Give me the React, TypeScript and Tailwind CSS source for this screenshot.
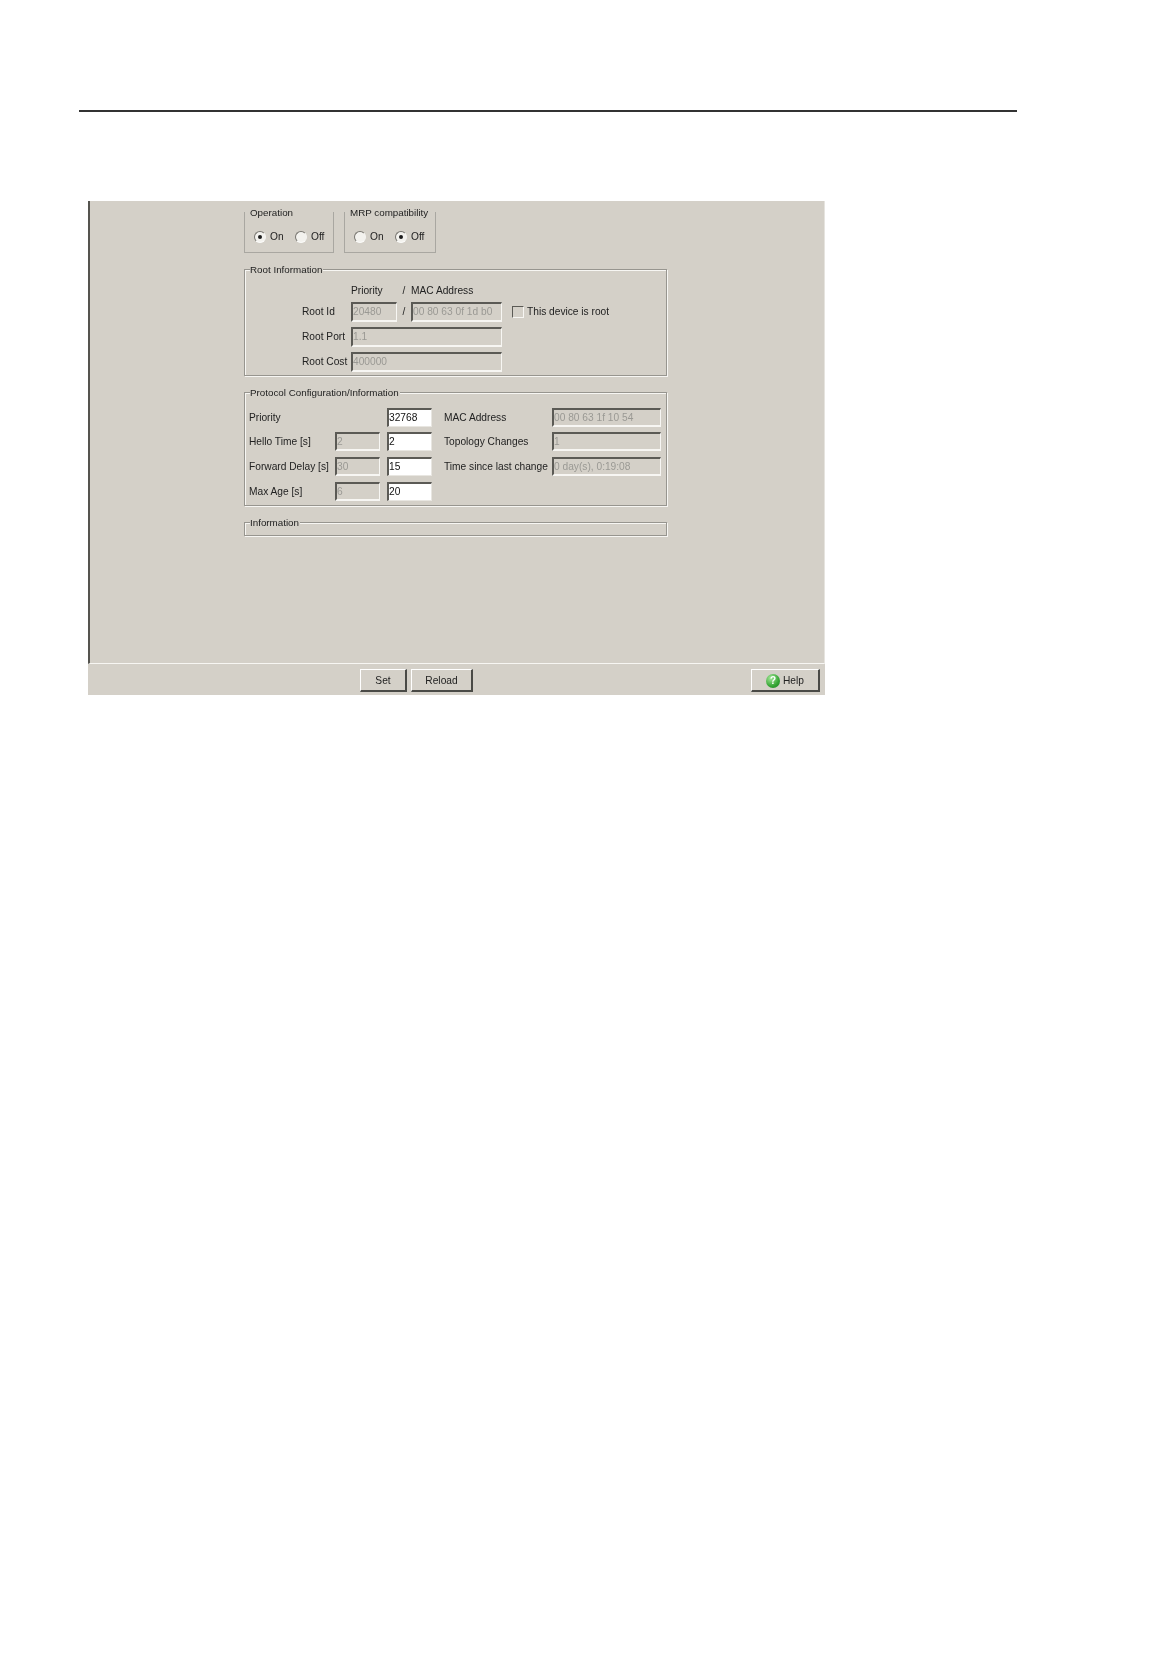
import React from "react";

const font = "[font-family:'Liberation_Sans',Arial,sans-serif]";

function Legend({ children }: { children: React.ReactNode }) {
  return <legend className="ml-[5px] h-[14px] pt-[2px] leading-[12px] pr-[1px] bg-[#d4d0c8] text-[9.8px] text-[#222] whitespace-nowrap">{children}</legend>;
}

function Radio({ on, label, gap }: { on?: boolean; label: string; gap?: boolean }) {
  return (
    <div className={gap ? "flex items-center ml-[5px]" : "flex items-center"}>
      <span className="w-[12px] h-[12px] rounded-full bg-[#f3f2ee] border border-[#77756f] border-r-[#f4f3f0] border-b-[#fbfbfa] flex items-center justify-center">
        {on && <span className="w-[4px] h-[4px] rounded-full bg-[#1c1c1c]" />}
      </span>
      <span className="ml-[4px] w-[20px] text-[10.2px] leading-[14px] text-[#222]">{label}</span>
    </div>
  );
}

function Field({ value, w, h = "h-[20px]" }: { value: string; w: string; h?: string }) {
  return (
    <div className={`${w} ${h} shrink-0 border-t-2 border-l-2 border-r border-b-2 border-t-[#5b5a55] border-l-[#5b5a55] border-r-[#f7f6f3] border-b-[#f7f6f3] text-[10.2px] leading-[15px] text-[#9a9994] overflow-hidden whitespace-nowrap`}>
      {value}
    </div>
  );
}

function Edit({ value }: { value: string }) {
  return (
    <div className="w-[45px] h-[19px] shrink-0 bg-white border-t-2 border-l-2 border-r border-b border-t-[#5b5a55] border-l-[#5b5a55] border-r-[#e8e6e1] border-b-[#e8e6e1] text-[10.2px] leading-[15px] text-[#111]">
      {value}
    </div>
  );
}

function Button({ children, w, cls }: { children: React.ReactNode; w: string; cls?: string }) {
  return (
    <div className={`${w} ${cls ?? ""} h-[23px] pt-[2px] flex items-center justify-center border-t border-l border-r-2 border-b-2 border-t-white border-l-white border-r-[#4a4a46] border-b-[#4a4a46] text-[10.2px] text-[#222]`}>
      {children}
    </div>
  );
}

function ProtoRow({ label, left, right, rlabel, rvalue, cls }: { label: string; left?: string; right: string; rlabel?: string; rvalue?: string; cls: string }) {
  return (
    <div className={`flex items-center h-[19px] ${cls}`}>
      <span className="w-[86px] shrink-0 text-[10.2px] text-[#222] whitespace-nowrap">{label}</span>
      {left !== undefined ? <Field value={left} w="w-[45px]" h="h-[19px]" /> : <div className="w-[45px] shrink-0" />}
      <div className="w-[7px] shrink-0" />
      <Edit value={right} />
      {rlabel !== undefined && <span className="ml-[12px] w-[108px] shrink-0 text-[10.2px] text-[#222] whitespace-nowrap">{rlabel}</span>}
      {rvalue !== undefined && <Field value={rvalue} w="w-[109px]" h="h-[19px]" />}
    </div>
  );
}

const fieldsetCls = "border border-[#97958f] shadow-[inset_1px_1px_0_#f7f6f3,1px_1px_0_#f7f6f3] min-w-0";

export default function App() {
  return (
    <div className={`w-[1174px] h-[1668px] bg-white overflow-hidden ${font}`}>
      <div className="ml-[79px] mt-[110px] w-[938px] h-[2px] bg-[#333]" />
      <div className="ml-[88px] mt-[89px] w-[737px] h-[494px] flex flex-col bg-[#d4d0c8] blur-[0.3px]">
        <div className="flex-1 border-l-2 border-l-[#55544f] border-r border-r-[#e6e4df] border-b border-b-[#f7f6f3] pl-[154px]">
          <div className="w-[423px] pt-[4px]">
            <div className="flex gap-[10px]">
              <fieldset className={`${fieldsetCls} border-t-0 shadow-none w-[90px] h-[48px] border-x-[#a9a7a1] border-b-[#a9a7a1]`}>
                <Legend>Operation</Legend>
                <div className="flex pl-[9px] pt-[11px]">
                  <Radio on label="On" />
                  <Radio label="Off" gap />
                </div>
              </fieldset>
              <fieldset className={`${fieldsetCls} border-t-0 shadow-none w-[92px] h-[48px] border-x-[#a9a7a1] border-b-[#a9a7a1]`}>
                <Legend>MRP compatibility</Legend>
                <div className="flex pl-[9px] pt-[11px]">
                  <Radio label="On" />
                  <Radio on label="Off" gap />
                </div>
              </fieldset>
            </div>

            <fieldset className={`${fieldsetCls} mt-[9px] pt-[8px] pb-[3px]`}>
              <Legend>Root Information</Legend>
              <div className="pl-[57px]">
                <div className="flex items-center h-[14px] text-[10.2px] text-[#222]">
                  <div className="w-[49px] shrink-0" />
                  <span className="w-[46px] shrink-0 whitespace-nowrap">Priority</span>
                  <span className="w-[14px] shrink-0 text-center">/</span>
                  <span className="whitespace-nowrap">MAC Address</span>
                </div>
                <div className="flex items-center mt-[4px] text-[10.2px] text-[#222]">
                  <span className="w-[49px] shrink-0 whitespace-nowrap">Root Id</span>
                  <Field value="20480" w="w-[46px]" />
                  <span className="w-[14px] shrink-0 text-center">/</span>
                  <Field value="00 80 63 0f 1d b0" w="w-[91px]" />
                  <span className="ml-[10px] w-[12px] h-[12px] shrink-0 border border-[#5b5a55] border-r-[#f7f6f3] border-b-[#f7f6f3]" />
                  <span className="ml-[3px] whitespace-nowrap">This device is root</span>
                </div>
                <div className="flex items-center mt-[5px] text-[10.2px] text-[#222]">
                  <span className="w-[49px] shrink-0 whitespace-nowrap">Root Port</span>
                  <Field value="1.1" w="w-[151px]" />
                </div>
                <div className="flex items-center mt-[5px] text-[10.2px] text-[#222]">
                  <span className="w-[49px] shrink-0 whitespace-nowrap">Root Cost</span>
                  <Field value="400000" w="w-[151px]" />
                </div>
              </div>
            </fieldset>

            <fieldset className={`${fieldsetCls} mt-[9px] pt-[9px] pb-[4px]`}>
              <Legend>Protocol Configuration/Information</Legend>
              <div className="pl-[4px]">
                <ProtoRow cls="" label="Priority" right="32768" rlabel="MAC Address" rvalue="00 80 63 1f 10 54" />
                <ProtoRow cls="mt-[5px]" label="Hello Time [s]" left="2" right="2" rlabel="Topology Changes" rvalue="1" />
                <ProtoRow cls="mt-[6px]" label="Forward Delay [s]" left="30" right="15" rlabel="Time since last change" rvalue="0 day(s), 0:19:08" />
                <ProtoRow cls="mt-[6px]" label="Max Age [s]" left="6" right="20" />
              </div>
            </fieldset>

            <fieldset className={`${fieldsetCls} mt-[9px] pb-[6px]`}>
              <Legend>Information</Legend>
            </fieldset>
          </div>
        </div>
        <div className="h-[31px] flex items-center pt-[2px] pl-[272px] pr-[5px] bg-[#d4d0c8]">
          <Button w="w-[47px]">Set</Button>
          <Button w="w-[62px]" cls="ml-[4px]">Reload</Button>
          <Button w="w-[69px]" cls="ml-auto gap-[3px]">
            <span className="w-[14px] h-[14px] rounded-full bg-[radial-gradient(circle_at_35%_30%,#a5e89a,#35a534_60%,#1d7a25)] flex items-center justify-center text-[10px] font-bold leading-none text-white">?</span>
            <span>Help</span>
          </Button>
        </div>
      </div>
    </div>
  );
}
